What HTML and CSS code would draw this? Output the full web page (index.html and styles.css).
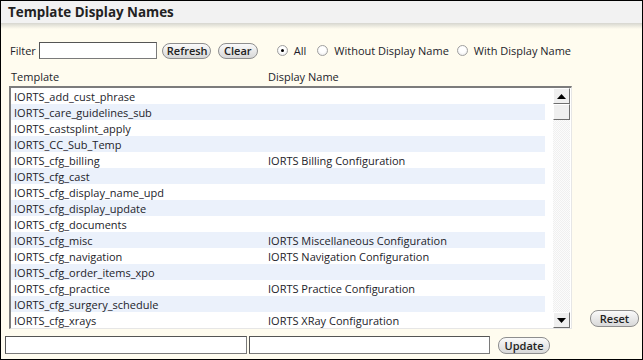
FILE: index.html
```html
<!DOCTYPE html>
<html>
<head>
<meta charset="utf-8">
<link rel="stylesheet" href="styles.css">
</head>
<body>
<div class="page">
  <div class="titlebar">Template Display Names</div>
  <div class="shade"></div>
  <div class="filter-row">
    <label class="lbl">Filter</label>
    <input class="filter-input" type="text">
    <button class="pill btn-refresh">Refresh</button>
    <button class="pill btn-clear">Clear</button>
    <span class="radio checked"></span><span class="rlabel r-all">All</span>
    <span class="radio"></span><span class="rlabel r-without">Without Display Name</span>
    <span class="radio"></span><span class="rlabel">With Display Name</span>
  </div>
  <div class="headers">
    <span class="h-template">Template</span>
    <span class="h-display">Display Name</span>
  </div>
  <div class="main-row">
    <div class="listbox">
      <div class="rows">
        <div class="row"><span class="c1">IORTS_add_cust_phrase</span><span class="c2"></span></div>
        <div class="row alt"><span class="c1">IORTS_care_guidelines_sub</span><span class="c2"></span></div>
        <div class="row"><span class="c1">IORTS_castsplint_apply</span><span class="c2"></span></div>
        <div class="row alt"><span class="c1">IORTS_CC_Sub_Temp</span><span class="c2"></span></div>
        <div class="row"><span class="c1">IORTS_cfg_billing</span><span class="c2">IORTS Billing Configuration</span></div>
        <div class="row alt"><span class="c1">IORTS_cfg_cast</span><span class="c2"></span></div>
        <div class="row"><span class="c1">IORTS_cfg_display_name_upd</span><span class="c2"></span></div>
        <div class="row alt"><span class="c1">IORTS_cfg_display_update</span><span class="c2"></span></div>
        <div class="row"><span class="c1">IORTS_cfg_documents</span><span class="c2"></span></div>
        <div class="row alt"><span class="c1">IORTS_cfg_misc</span><span class="c2">IORTS Miscellaneous Configuration</span></div>
        <div class="row"><span class="c1">IORTS_cfg_navigation</span><span class="c2">IORTS Navigation Configuration</span></div>
        <div class="row alt"><span class="c1">IORTS_cfg_order_items_xpo</span><span class="c2"></span></div>
        <div class="row"><span class="c1">IORTS_cfg_practice</span><span class="c2">IORTS Practice Configuration</span></div>
        <div class="row alt"><span class="c1">IORTS_cfg_surgery_schedule</span><span class="c2"></span></div>
        <div class="row"><span class="c1">IORTS_cfg_xrays</span><span class="c2">IORTS XRay Configuration</span></div>
      </div>
      <div class="scrollbar">
        <div class="sb-btn">
          <svg width="9" height="5" viewBox="0 0 9 5"><path d="M0 5 L4.5 0 L9 5 Z" fill="#000"/></svg>
        </div>
        <div class="sb-thumb"></div>
        <div class="sb-track"></div>
        <div class="sb-btn">
          <svg width="9" height="5" viewBox="0 0 9 5"><path d="M0 0 L9 0 L4.5 5 Z" fill="#000"/></svg>
        </div>
      </div>
    </div>
    <div class="side">
      <button class="pill btn-reset">Reset</button>
    </div>
  </div>
  <div class="bottom-row">
    <input class="b-input" type="text">
    <input class="b-input b-input2" type="text">
    <button class="pill btn-update">Update</button>
  </div>
</div>
</body>
</html>
```

FILE: styles.css
```css
* { box-sizing: border-box; }
html, body { margin: 0; padding: 0; }
body {
  font-family: "Open Sans", "Noto Sans", sans-serif;
  font-size: 11px;
  color: #231d2a;
}
.page {
  width: 643px;
  height: 360px;
  border: 1px solid #000;
  background: #fffcef;
  overflow: hidden;
}
.titlebar {
  height: 22px;
  background: #f2f2f2;
  font-weight: bold;
  font-size: 13.4px;
  line-height: 22px;
  padding-left: 7px;
  color: #222;
}
.shade {
  height: 6px;
  background: linear-gradient(#d6d6cf, #fffcef);
}
.filter-row {
  display: flex;
  align-items: center;
  height: 17px;
  margin-top: 13px;
  padding-left: 9px;
}
.lbl { margin-right: 3px; }
.filter-input {
  width: 118px;
  height: 17px;
  border: 1px solid #7a7a7a;
  border-top-color: #555;
  border-left-color: #555;
  background: #fff;
  margin: 0;
  padding: 0;
}
.pill {
  font-family: "Open Sans", "Noto Sans", sans-serif;
  font-size: 11px;
  font-weight: 600;
  color: #222;
  height: 16px;
  border: 1px solid #8e8e8e;
  border-radius: 8px;
  background: linear-gradient(#fafafa, #e6e6e6 60%, #d8d8d8);
  padding: 0 4px;
  line-height: 13px;
  margin: 0;
}
.btn-refresh { margin-left: 5px; width: 49px; }
.btn-clear { margin-left: 7px; width: 40px; }
.radio {
  width: 11px;
  height: 11px;
  border-radius: 50%;
  border: 1px solid #a0a0a0;
  background: radial-gradient(circle at 50% 40%, #fff 40%, #e4e4e4);
  position: relative;
  display: inline-block;
  flex: none;
}
.radio.checked::after {
  content: "";
  position: absolute;
  left: 3px;
  top: 3px;
  width: 3px;
  height: 3px;
  border-radius: 50%;
  background: #000;
}
.btn-clear + .radio { margin-left: 19px; }
.rlabel { margin-left: 6px; }
.r-all { margin-right: 11px; }
.r-without { margin-right: 8px; }
.headers {
  display: flex;
  height: 15px;
  margin-top: 10px;
  line-height: 15px;
  padding-left: 10px;
}
.h-template { width: 257px; }
.main-row {
  display: flex;
  align-items: flex-end;
  margin-top: 2px;
  padding-left: 8px;
}
.listbox {
  width: 563px;
  height: 243px;
  background: #fff;
  border-top: 2px solid #7c7c7c;
  border-left: 2px solid #7c7c7c;
  border-right: 1px solid #e6e6e6;
  border-bottom: 1px solid #e6e6e6;
  display: flex;
  padding-right: 1px;
}
.rows {
  width: 535px;
  height: 240px;
  overflow: hidden;
}
.row {
  display: flex;
  height: 16px;
  padding-top: 1px;
  line-height: 15px;
  white-space: nowrap;
}
.row.alt { background: #ebf1fb; }
.c1 { width: 257px; padding-left: 3px; }
.scrollbar {
  margin-left: 8px;
  width: 17px;
  height: 240px;
  display: flex;
  flex-direction: column;
}
.sb-btn {
  height: 16px;
  background: #efefef;
  border: 1px solid #fff;
  border-right-color: #6e6e6e;
  border-bottom-color: #6e6e6e;
  display: flex;
  align-items: center;
  justify-content: center;
  flex: none;
}
.sb-thumb {
  height: 16px;
  background: #efefef;
  border: 1px solid #fff;
  border-right-color: #6e6e6e;
  border-bottom-color: #6e6e6e;
  flex: none;
}
.sb-track {
  flex: 1;
  background-color: #fafafa;
  background-image: repeating-conic-gradient(#f0f0f0 0 25%, #fcfcfc 0 50%);
  background-size: 2px 2px;
}
.side {
  flex: 1;
  display: flex;
  justify-content: flex-end;
  padding-right: 3px;
  padding-bottom: 2px;
}
.btn-reset { width: 49px; height: 17px; }
.bottom-row {
  display: flex;
  align-items: center;
  margin-top: 7px;
  padding-left: 4px;
}
.b-input {
  width: 242px;
  height: 18px;
  margin: 0;
  padding: 0;
  background: #fff;
  border: 1px solid #7a7a7a;
  border-top-color: #555;
  border-left-color: #555;
}
.b-input2 { margin-left: 2px; width: 241px; }
.btn-update { margin-left: 8px; width: 52px; height: 17px; }
```
